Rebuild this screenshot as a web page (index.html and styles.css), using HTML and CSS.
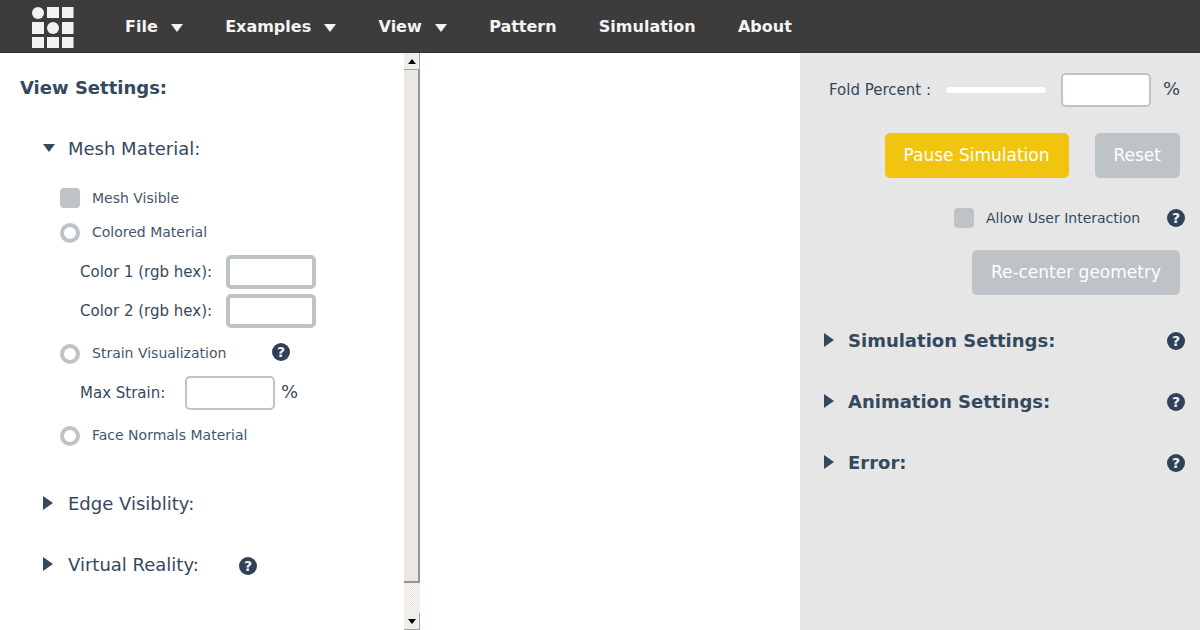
FILE: index.html
```html
<!DOCTYPE html>
<html>
<head>
<meta charset="utf-8">
<title>Origami Simulator</title>
<link rel="stylesheet" href="styles.css">
</head>
<body>
<nav class="navbar">
  <svg class="logo" width="42" height="41" viewBox="0 0 42 41">
    <g fill="#f2f2f2">
      <circle cx="6" cy="6" r="6"/><rect x="15" y="0" width="12" height="11"/><rect x="30" y="0" width="11.5" height="11"/>
      <rect x="0" y="15" width="12" height="12"/><circle cx="21" cy="21" r="6"/><rect x="30" y="15" width="11.5" height="12"/>
      <rect x="0" y="30" width="12" height="11"/><rect x="15" y="30" width="12" height="11"/><rect x="30" y="30" width="11.5" height="11"/>
    </g>
  </svg>
  <ul class="menu">
    <li class="caret">File</li>
    <li class="caret">Examples</li>
    <li class="caret">View</li>
    <li>Pattern</li>
    <li>Simulation</li>
    <li>About</li>
  </ul>
</nav>
<div class="workspace">
  <aside class="left">
    <div class="left-content">
      <h3 class="view-title">View Settings:</h3>
      <div class="section open mesh-head"><span class="tri-down"></span><span>Mesh Material:</span></div>
      <div class="opt first"><span class="check"></span><span>Mesh Visible</span></div>
      <div class="opt colored"><span class="radio"></span><span>Colored Material</span></div>
      <div class="field f1"><span class="field-label">Color 1 (rgb hex):</span><span class="input thick"></span></div>
      <div class="field f2"><span class="field-label">Color 2 (rgb hex):</span><span class="input thick"></span></div>
      <div class="opt strain"><span class="radio"></span><span class="strain-label">Strain Visualization</span><span class="help">?</span></div>
      <div class="field f3"><span class="field-label strain-field">Max Strain:</span><span class="input"></span><span class="pct">%</span></div>
      <div class="opt normals"><span class="radio"></span><span>Face Normals Material</span></div>
      <div class="section edge"><span class="tri-right"></span><span>Edge Visiblity:</span></div>
      <div class="section vr"><span class="tri-right"></span><span class="vr-label">Virtual Reality:</span><span class="help">?</span></div>
    </div>
    <div class="scrollbar">
      <div class="sb-btn"><span class="sb-up"></span></div>
      <div class="sb-thumb"></div>
      <div class="sb-track"></div>
      <div class="sb-btn"><span class="sb-down"></span></div>
    </div>
  </aside>
  <main class="stage"></main>
  <aside class="right">
    <div class="fold">
      <span class="fold-label">Fold Percent :</span>
      <span class="slider"></span>
      <span class="input light"></span>
      <span class="pct">%</span>
    </div>
    <div class="buttons">
      <span class="btn yellow">Pause Simulation</span>
      <span class="btn grey">Reset</span>
    </div>
    <div class="allow"><span class="check"></span><span class="allow-label">Allow User Interaction</span><span class="help">?</span></div>
    <div class="recenter"><span class="btn grey">Re-center geometry</span></div>
    <div class="section-r first-r"><span class="tri-right"></span><span class="title-r">Simulation Settings:</span><span class="help">?</span></div>
    <div class="section-r"><span class="tri-right"></span><span class="title-r">Animation Settings:</span><span class="help">?</span></div>
    <div class="section-r"><span class="tri-right"></span><span class="title-r">Error:</span><span class="help">?</span></div>
  </aside>
</div>
</body>
</html>
```
FILE: styles.css
```css
* { box-sizing: border-box; }
html, body { margin: 0; height: 100%; overflow: hidden; }
body { font-family: "DejaVu Sans", sans-serif; color: #34495e; background: #fff; width: 1200px; height: 630px; }

.navbar { height: 53px; background: #3c3c3c; border-bottom: 1px solid #333; display: flex; align-items: flex-start; padding-left: 32px; }
.logo { margin-top: 7px; flex: none; }
.menu { list-style: none; margin: 0 0 0 51px; padding: 0; display: flex; color: #f4f4f4; font-weight: 700; font-size: 16px; line-height: 53px; gap: 42.2px; }
.caret { display: flex; align-items: center; gap: 13.2px; }
.caret::after { content: ""; border: 6px solid transparent; border-top: 8px solid #f4f4f4; border-bottom: 0; margin-top: 2px; }

.workspace { display: flex; height: 577px; }
.left { width: 420px; flex: none; display: flex; overflow: hidden; }
.left-content { width: 404px; flex: none; padding: 0 0 0 20px; }
.stage { flex: 1; background: #fff; }
.right { width: 400px; flex: none; background: #e6e6e6; padding: 20px 20px 0 29px; }

.view-title { margin: 24px 0 0; font-size: 18px; line-height: 21px; font-weight: 700; }
.section { display: flex; align-items: center; font-size: 18px; line-height: 24px; padding-left: 22px; }
.mesh-head { margin-top: 39px; }
.tri-down { width: 0; height: 0; border: 6.5px solid transparent; border-top: 8px solid #34495e; border-bottom: 0; margin: -2px 0 0 1px; flex: none; }
.tri-right { width: 0; height: 0; border: 7px solid transparent; border-left: 10px solid #34495e; border-right: 0; margin: -2px 0 0 1px; flex: none; }
.mesh-head span:last-child { margin-left: 13px; }
.section .tri-right + span { margin-left: 15px; }

.opt { display: flex; align-items: center; font-size: 14px; line-height: 20px; padding-left: 40px; color: #34495e; }
.opt > span:nth-child(2) { margin-left: 12px; opacity: .92; }
.check { width: 20px; height: 20px; background: #bdc3c7; border-radius: 4px; flex: none; }
.radio { width: 20px; height: 20px; border: 4px solid #bdc3c7; border-radius: 50%; background: #fff; flex: none; }
.first { margin-top: 27px; }
.colored { margin-top: 15px; }
.strain { margin-top: 16px; }
.normals { margin-top: 16px; }
.opt .radio + span { margin-top: -2px; }

.field { display: flex; align-items: center; font-size: 15px; padding-left: 60px; height: 34px; }
.field-label { width: 146px; flex: none; }
.strain-field { width: 105px; }
.f1 { margin-top: 12px; }
.f2 { margin-top: 5px; }
.f3 { margin-top: 12px; }
.input { display: block; width: 90px; height: 34px; border: 2px solid #bdc3c7; border-radius: 5px; background: #fff; flex: none; }
.input.thick { border-width: 4px; }
.pct { font-size: 18px; margin-left: 6px; margin-top: -4px; }
.strain-label { width: 180px; flex: none; }
.help { width: 18px; height: 18px; border-radius: 50%; background: #2f4059; color: #f0f0f0; font-size: 14px; font-weight: 700; line-height: 18px; text-align: center; flex: none; }
.strain .help { margin-top: -4px; }
.edge { margin-top: 46px; }
.vr { margin-top: 37px; }
.vr-label { width: 171px; flex: none; }
.vr .help { margin-top: 1px; }

.scrollbar { width: 16px; flex: none; display: flex; flex-direction: column; background: #efece6; }
.sb-btn { height: 17px; flex: none; display: flex; align-items: center; justify-content: center; background: #f0eee9; border-bottom: 1px solid #a5a29c; border-right: 1px solid #a5a29c; }
.sb-up { border: 4px solid transparent; border-bottom: 5px solid #000; border-top: 0; }
.sb-down { border: 4px solid transparent; border-top: 5px solid #000; border-bottom: 0; }
.sb-thumb { height: 513px; flex: none; background: #ebe8e2; border-bottom: 2px solid #98958f; border-right: 2px solid #98958f; }
.sb-track { flex: 1; background: repeating-conic-gradient(#e6e3dd 0 25%, #fbfaf8 0 50%) 0 0 / 2px 2px; }

.fold { display: flex; align-items: center; height: 34px; font-size: 15px; }
.fold-label { width: 117px; flex: none; }
.slider { width: 100px; height: 6px; border-radius: 3px; background: #fff; flex: none; }
.light { margin-left: 15px; }
.right .pct { margin-left: 12px; }

.buttons { display: flex; justify-content: flex-end; gap: 26px; margin-top: 26px; }
.btn { display: block; height: 45px; line-height: 44px; padding: 0 19px; font-size: 17px; color: #fff; border-radius: 5px; }
.yellow { background: #f1c40f; }
.grey { background: #bdc3c7; }
.allow { display: flex; align-items: center; justify-content: flex-end; margin: 30px -5px 0 0; height: 20px; font-size: 14px; }
.allow-label { margin-left: 12px; width: 181px; flex: none; }
.recenter { display: flex; justify-content: flex-end; margin-top: 22px; }

.section-r { display: flex; align-items: center; margin: 37px -5px 0 -6px; height: 24px; font-size: 18px; font-weight: 700; }
.first-r { margin-top: 33px; }
.section-r .tri-right { margin-top: 0; }
.title-r { margin-left: 14px; flex: 1; }
.section-r .help { margin-top: 2px; }
```
